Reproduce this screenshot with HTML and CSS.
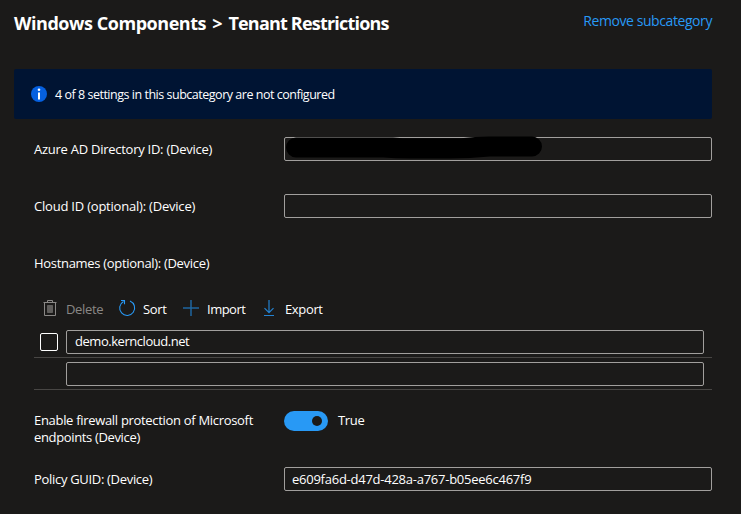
FILE: index.html
```html
<!DOCTYPE html>
<html lang="en">
<head>
<meta charset="utf-8">
<title>Tenant Restrictions</title>
<link rel="stylesheet" href="styles.css">
</head>
<body>
<main class="panel">
  <header class="header">
    <h1 class="title"><span class="t-parent">Windows Components</span> <span class="chevron">&gt;</span> <span class="t-child">Tenant Restrictions</span></h1>
    <a class="remove">Remove subcategory</a>
  </header>
  <div class="banner">
    <svg class="info" viewBox="0 0 16 16"><circle cx="8" cy="8" r="8" fill="#0560e0"/><circle cx="8" cy="3.800" r="1.300" fill="#fff"/><path d="M7 6.500h2v7H7z" fill="#fff"/></svg>
    <span class="banner-text">4 of 8 settings in this subcategory are not configured</span>
  </div>
  <section class="settings">
    <div class="row directory">
      <span class="label l-directory">Azure AD Directory ID: (Device)</span>
      <div class="input">
        <svg class="redaction" viewBox="0 0 258 24"><path d="M11 1.500H108L118 2.300H176Q190 .5 204 .5H247A10 10 0 0 1 247 20.500H205Q185 22.500 165 22.500H125Q110 22.300 98 21.500H11A10 10 0 0 1 11 1.500Z" fill="#000"/></svg>
      </div>
    </div>
    <div class="row cloud">
      <span class="label l-cloud">Cloud ID (optional): (Device)</span>
      <div class="input"></div>
    </div>
    <div class="row hostnames">
      <span class="label l-host">Hostnames (optional): (Device)</span>
    </div>
    <div class="toolbar">
      <span class="tool tool-delete"><svg class="icon" viewBox="0 0 16 16" fill="none" stroke="#8a8886"><path d="M1.500 1.500h13M5.500 1.500V-.5h5v2M2.500 1.500v13h11v-13"/><path d="M5.500 4.500h5v7h-5z" fill="#605e5c" stroke="#605e5c"/></svg><span class="t-delete">Delete</span></span>
      <span class="tool tool-sort"><svg class="icon" viewBox="0 0 16 16" fill="none" stroke="#2899f5" stroke-width="1.100"><path d="M11 0A7.500 7.500 0 1 1 4.500 .4M2 -.5H5.500V3.300"/></svg><span class="t-sort">Sort</span></span>
      <span class="tool tool-import"><svg class="icon" viewBox="0 0 16 16" fill="none" stroke="#1f66a0" stroke-width="1.500"><path d="M8-1v16M0 7h16"/></svg><span class="t-import">Import</span></span>
      <span class="tool tool-export"><svg class="icon" viewBox="0 0 16 16" fill="none" stroke="#2482d0" stroke-width="1.200"><path d="M8-1v12.500M3.500 7.200L8 11.700l4.500-4.500M3 14.500h10"/></svg><span class="t-export">Export</span></span>
    </div>
    <div class="host-row"><span class="checkbox"></span><div class="input host-input"><span class="t-host">demo.kerncloud.net</span></div></div>
    <div class="host-row"><div class="input host-input"></div></div>
    <div class="row firewall">
      <span class="label"><span class="l-fire">Enable firewall protection of Microsoft</span><br><span class="l-end">endpoints (Device)</span></span>
      <span class="toggle"><span class="knob"></span></span>
      <span class="t-true">True</span>
    </div>
    <div class="row policy">
      <span class="label l-policy">Policy GUID: (Device)</span>
      <div class="input"><span class="t-guid">e609fa6d-d47d-428a-a767-b05ee6c467f9</span></div>
    </div>
  </section>
</main>
</body>
</html>
```
FILE: styles.css
```css
* { box-sizing: border-box; }
body {
  margin: 0;
  background: #1b1a19;
  color: #fff;
  font: 13px/17px "Open Sans", "Noto Sans", sans-serif;
  letter-spacing: -0.35px;
  white-space: nowrap;
}
.panel { height: 514px; padding: 0 29px 0 14px; overflow: hidden; }
.header { display: flex; justify-content: space-between; height: 69px; padding-top: 11px; }
.title { margin: 0; font-size: 18px; line-height: 24px; font-weight: 700; letter-spacing: -0.45px; }
.chevron { margin: 0 2px; }
.t-child { letter-spacing: -0.8px; }
.remove { color: #2899f5; font-size: 14px; line-height: 20px; letter-spacing: -0.42px; }
.banner { display: flex; align-items: center; height: 50px; padding-left: 17px; gap: 8px; border-radius: 2px; background: #001433; }
.banner-text { font-size: 12.5px; letter-spacing: -0.48px; }
.info { width: 16px; height: 16px; }
.settings { padding-left: 20px; }
.row { display: flex; align-items: center; height: 24px; }
.label { width: 250px; flex: none; }
.l-directory { letter-spacing: -0.26px; }
.l-cloud { letter-spacing: -0.21px; }
.l-host, .l-policy, .l-fire { letter-spacing: -0.31px; }
.directory { margin-top: 18px; }
.cloud { margin-top: 33px; }
.hostnames { margin-top: 33px; }
.input { position: relative; display: flex; align-items: center; flex: 1; height: 24px; padding-left: 8px; border: 1px solid #a19f9d; border-radius: 2px; }
.redaction { position: absolute; left: 0; top: -2px; width: 258px; height: 24px; }
.toolbar { display: flex; height: 32px; margin-top: 18px; padding-left: 8px; }
.tool { display: flex; align-items: center; gap: 8px; }
.icon { width: 16px; height: 16px; overflow: visible; }
.tool-delete { width: 77px; color: #8a8886; }
.tool-sort { width: 64px; }
.tool-import { width: 78px; letter-spacing: -0.5px; }
.host-row { display: flex; justify-content: flex-end; height: 32px; padding: 4px 8px 0 6px; border-bottom: 1px solid #484644; }
.toolbar + .host-row { height: 33px; padding-top: 5px; }
.host-input { flex: 0 0 638px; }
.t-host { margin-top: -2px; letter-spacing: -0.46px; }
.t-guid { margin-left: -1px; letter-spacing: -0.25px; }
.checkbox { width: 18px; height: 18px; margin: 3px 8px 0 0; border: 1px solid #fff; border-radius: 2px; }
.firewall { height: 34px; margin-top: 22px; }
.toggle { display: flex; align-items: center; justify-content: flex-end; width: 44px; height: 20px; margin: 0 10px 16px 0; padding-right: 6px; border-radius: 10px; background: #2899f5; }
.knob { width: 10px; height: 10px; border-radius: 50%; background: #1b1a19; }
.t-true { margin-bottom: 17px; }
.policy { margin-top: 21px; }
```
